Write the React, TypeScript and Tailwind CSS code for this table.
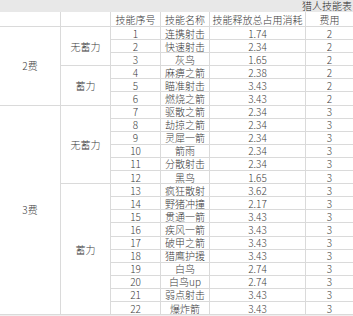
const rows = [
  ["1", "连携射击", "1.74", "2"],
  ["2", "快速射击", "2.34", "2"],
  ["3", "灰鸟", "1.65", "2"],
  ["4", "麻痹之箭", "2.38", "2"],
  ["5", "瞄准射击", "3.43", "2"],
  ["6", "燃烧之箭", "3.43", "2"],
  ["7", "驱散之箭", "2.34", "3"],
  ["8", "劫掠之箭", "2.34", "3"],
  ["9", "灵犀一箭", "2.34", "3"],
  ["10", "箭雨", "2.34", "3"],
  ["11", "分散射击", "2.34", "3"],
  ["12", "黑鸟", "1.65", "3"],
  ["13", "疯狂散射", "3.62", "3"],
  ["14", "野猪冲撞", "2.17", "3"],
  ["15", "贯通一箭", "3.43", "3"],
  ["16", "疾风一箭", "3.43", "3"],
  ["17", "破甲之箭", "3.43", "3"],
  ["18", "猎鹰护援", "3.43", "3"],
  ["19", "白鸟", "2.74", "3"],
  ["20", "白鸟up", "2.74", "3"],
  ["21", "弱点射击", "3.43", "3"],
  ["22", "爆炸箭", "3.43", "3"],
];

const cell =
  "flex items-center justify-center overflow-hidden whitespace-nowrap border-b border-[#dadada] pt-px leading-[12px]";

export default function App() {
  return (
    <div
      className="h-[316px] w-[353px] overflow-hidden bg-[#efefef] text-[10px] font-light text-[#3c3c3c]"
      style={{ fontFamily: '"Noto Sans CJK SC", "Liberation Sans", sans-serif' }}
    >
      <div className="grid grid-cols-[61px_50px_50px_49px_96px_47px] grid-rows-[12px_15px_repeat(22,13.1px)] bg-white">
        {/* title band */}
        <div className="col-span-6 flex items-center justify-end bg-[#e8e8e8] pr-px">
          <span className="whitespace-nowrap leading-[12px] text-[#2a2a2a]">猎人技能表</span>
        </div>

        {/* header */}
        <div className={`${cell} border-r`} />
        <div className={`${cell} border-r`} />
        <div className={`${cell} border-r`}>技能序号</div>
        <div className={`${cell} border-r`}>技能名称</div>
        <div className={`${cell} border-r`}>技能释放总占用消耗</div>
        <div className={cell}>费用</div>

        {/* merged groups */}
        <div className={`${cell} col-start-1 row-start-3 row-span-6 border-r`}>2费</div>
        <div className={`${cell} col-start-2 row-start-3 row-span-3 border-r`}>无蓄力</div>
        <div className={`${cell} col-start-2 row-start-6 row-span-3 border-r`}>蓄力</div>
        <div className={`${cell} col-start-1 row-start-9 row-span-16 border-r`}>3费</div>
        <div className={`${cell} col-start-2 row-start-9 row-span-6 border-r`}>无蓄力</div>
        <div className={`${cell} col-start-2 row-start-15 row-span-10 border-r`}>蓄力</div>

        {rows.map((r) => (
          <div key={r[0]} className="contents">
            <div className={`${cell} col-start-3 border-r`}>{r[0]}</div>
            <div className={`${cell} col-start-4 border-r`}>{r[1]}</div>
            <div className={`${cell} col-start-5 border-r`}>{r[2]}</div>
            <div className={`${cell} col-start-6`}>{r[3]}</div>
          </div>
        ))}
      </div>
    </div>
  );
}
